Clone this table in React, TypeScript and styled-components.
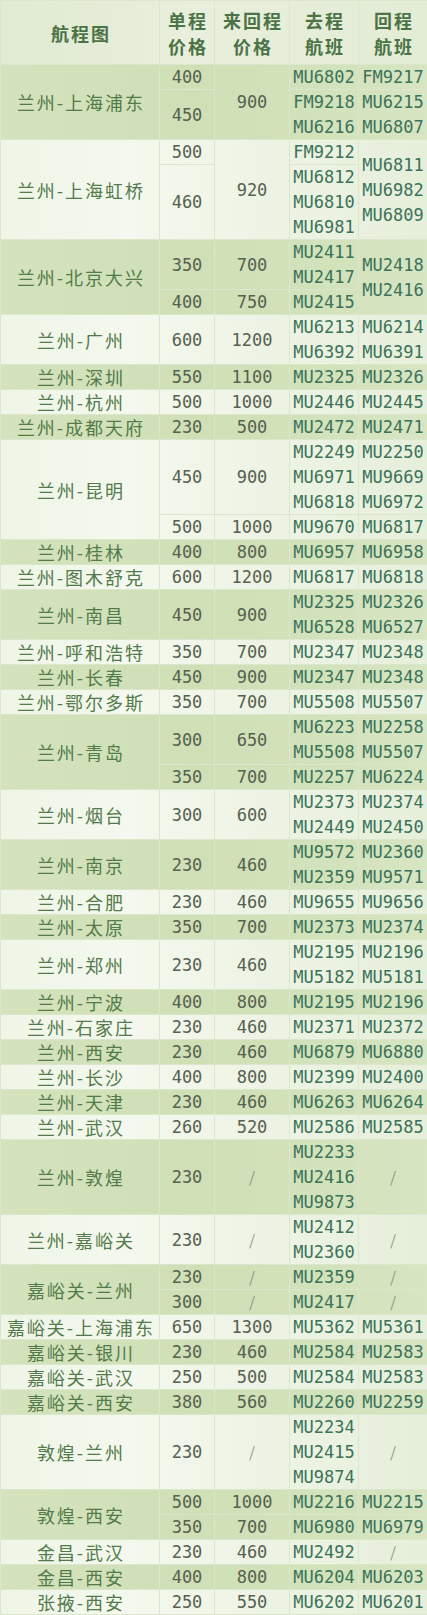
import React from 'react';
import styled, { createGlobalStyle, css } from 'styled-components';

const GlobalStyle = createGlobalStyle`
  html, body {
    margin: 0;
    padding: 0;
    background: #e8efdd;
  }
  body {
    font-family: "Noto Sans CJK SC", "Noto Sans", sans-serif;
  }
`;

type Tone = 'green' | 'pale';
type Kind = 'price' | 'flight' | 'slash';

interface CellSpec {
  lines: string[];
  span: number;
  kind: Kind;
}

interface GroupSpec {
  name: string;
  rows: CellSpec[][];
}

const parseCell = (spec: string): CellSpec => {
  const [text, span] = spec.split('^');
  const lines = text.split(',');
  let kind: Kind = 'price';
  if (text === '/') kind = 'slash';
  else if (/^[A-Z]/.test(text)) kind = 'flight';
  return { lines, span: span ? Number(span) : 1, kind };
};

const raw: [string, string[]][] = [
  ['兰州-上海浦东', ['400|900^2|MU6802|FM9217', '450|FM9218,MU6216|MU6215,MU6807']],
  ['兰州-上海虹桥', ['500|920^2|FM9212|MU6811,MU6982,MU6809^2', '460|MU6812,MU6810,MU6981']],
  ['兰州-北京大兴', ['350|700|MU2411,MU2417|MU2418,MU2416^2', '400|750|MU2415']],
  ['兰州-广州', ['600|1200|MU6213,MU6392|MU6214,MU6391']],
  ['兰州-深圳', ['550|1100|MU2325|MU2326']],
  ['兰州-杭州', ['500|1000|MU2446|MU2445']],
  ['兰州-成都天府', ['230|500|MU2472|MU2471']],
  ['兰州-昆明', ['450|900|MU2249,MU6971,MU6818|MU2250,MU9669,MU6972', '500|1000|MU9670|MU6817']],
  ['兰州-桂林', ['400|800|MU6957|MU6958']],
  ['兰州-图木舒克', ['600|1200|MU6817|MU6818']],
  ['兰州-南昌', ['450|900|MU2325,MU6528|MU2326,MU6527']],
  ['兰州-呼和浩特', ['350|700|MU2347|MU2348']],
  ['兰州-长春', ['450|900|MU2347|MU2348']],
  ['兰州-鄂尔多斯', ['350|700|MU5508|MU5507']],
  ['兰州-青岛', ['300|650|MU6223,MU5508|MU2258,MU5507', '350|700|MU2257|MU6224']],
  ['兰州-烟台', ['300|600|MU2373,MU2449|MU2374,MU2450']],
  ['兰州-南京', ['230|460|MU9572,MU2359|MU2360,MU9571']],
  ['兰州-合肥', ['230|460|MU9655|MU9656']],
  ['兰州-太原', ['350|700|MU2373|MU2374']],
  ['兰州-郑州', ['230|460|MU2195,MU5182|MU2196,MU5181']],
  ['兰州-宁波', ['400|800|MU2195|MU2196']],
  ['兰州-石家庄', ['230|460|MU2371|MU2372']],
  ['兰州-西安', ['230|460|MU6879|MU6880']],
  ['兰州-长沙', ['400|800|MU2399|MU2400']],
  ['兰州-天津', ['230|460|MU6263|MU6264']],
  ['兰州-武汉', ['260|520|MU2586|MU2585']],
  ['兰州-敦煌', ['230|/|MU2233,MU2416,MU9873|/']],
  ['兰州-嘉峪关', ['230|/|MU2412,MU2360|/']],
  ['嘉峪关-兰州', ['230|/|MU2359|/', '300|/|MU2417|/']],
  ['嘉峪关-上海浦东', ['650|1300|MU5362|MU5361']],
  ['嘉峪关-银川', ['230|460|MU2584|MU2583']],
  ['嘉峪关-武汉', ['250|500|MU2584|MU2583']],
  ['嘉峪关-西安', ['380|560|MU2260|MU2259']],
  ['敦煌-兰州', ['230|/|MU2234,MU2415,MU9874|/']],
  ['敦煌-西安', ['500|1000|MU2216|MU2215', '350|700|MU6980|MU6979']],
  ['金昌-武汉', ['230|460|MU2492|/']],
  ['金昌-西安', ['400|800|MU6204|MU6203']],
  ['张掖-西安', ['250|550|MU6202|MU6201']],
];

const groups: GroupSpec[] = raw.map(([name, rows]) => ({
  name,
  rows: rows.map((r) => r.split('|').map(parseCell)),
}));

const headers: string[][] = [['航程图'], ['单程', '价格'], ['来回程', '价格'], ['去程', '航班'], ['回程', '航班']];

const LINE = '#dce6cd';

const Page = styled.div`
  width: 427px;
  background: #e8efdd;
`;

const Table = styled.table`
  width: 427px;
  table-layout: fixed;
  border-collapse: collapse;
  border: 1px solid ${LINE};
`;

const Col = styled.col<{ $w: number }>`
  width: ${(p) => p.$w}px;
`;

const Head = styled.thead`
  background: linear-gradient(90deg, #e1ead2 0%, #e8efdc 45%, #e3ecd5 100%);
`;

const HeadCell = styled.th`
  border: 1px solid ${LINE};
  padding: 6px 0 5px 2px;
  font-family: "Noto Sans CJK SC", "Noto Sans", sans-serif;
  font-size: 18px;
  font-weight: 700;
  color: #4b7346;
  letter-spacing: 2px;
  text-align: center;
  vertical-align: middle;
  white-space: nowrap;
`;

const HeadLine = styled.div`
  height: 26px;
  line-height: 26px;
`;

const Group = styled.tbody<{ $tone: Tone }>`
  background: ${(p) =>
    p.$tone === 'green'
      ? 'linear-gradient(90deg, #d4e3bd 0%, #cfdfb6 45%, #d2e2ba 75%, #d7e5c3 100%)'
      : 'linear-gradient(90deg, #eff5e7 0%, #f4f8ee 30%, #eef4e5 60%, #e6efda 100%)'};
`;

const kindStyles = {
  price: css`
    font-family: "DejaVu Sans Mono", "Liberation Mono", monospace;
    font-size: 17px;
    color: #56614f;
  `,
  flight: css`
    font-family: "DejaVu Sans Mono", "Liberation Mono", monospace;
    font-size: 17px;
    color: #3b7259;
  `,
  slash: css`
    font-family: "DejaVu Sans", sans-serif;
    font-size: 18px;
    font-weight: 300;
    color: #84947c;
  `,
};

const Cell = styled.td<{ $kind: Kind }>`
  border: 1px solid ${LINE};
  padding: 0;
  text-align: center;
  vertical-align: middle;
  white-space: nowrap;
  ${(p) => kindStyles[p.$kind]}
`;

const NameCell = styled.td`
  border: 1px solid ${LINE};
  padding: 0 0 0 2px;
  text-align: center;
  vertical-align: middle;
  white-space: nowrap;
  font-family: "Noto Sans CJK SC", "Noto Sans", sans-serif;
  font-size: 18px;
  letter-spacing: 2px;
  color: #527a4a;
`;

const Lines = styled.div`
  margin-bottom: -1px;
`;

const Line = styled.div`
  height: 25px;
  line-height: 25px;
`;

const Stack: React.FC<{ lines: string[] }> = ({ lines }) => (
  <Lines>
    {lines.map((l, i) => (
      <Line key={i}>{l}</Line>
    ))}
  </Lines>
);

export default function App() {
  return (
    <Page>
      <GlobalStyle />
      <Table>
        <colgroup>
          <Col $w={159} />
          <Col $w={55} />
          <Col $w={75} />
          <Col $w={69} />
          <Col $w={69} />
        </colgroup>
        <Head>
          <tr>
            {headers.map((h, i) => (
              <HeadCell key={i}>
                {h.map((t) => (
                  <HeadLine key={t}>{t}</HeadLine>
                ))}
              </HeadCell>
            ))}
          </tr>
        </Head>
        {groups.map((g, gi) => (
          <Group key={g.name + gi} $tone={gi % 2 === 0 ? 'green' : 'pale'}>
            {g.rows.map((row, ri) => (
              <tr key={ri}>
                {ri === 0 && (
                  <NameCell rowSpan={g.rows.length}>
                    <Stack lines={[g.name]} />
                  </NameCell>
                )}
                {row.map((c, ci) => (
                  <Cell key={ci} $kind={c.kind} rowSpan={c.span}>
                    <Stack lines={c.lines} />
                  </Cell>
                ))}
              </tr>
            ))}
          </Group>
        ))}
      </Table>
    </Page>
  );
}
